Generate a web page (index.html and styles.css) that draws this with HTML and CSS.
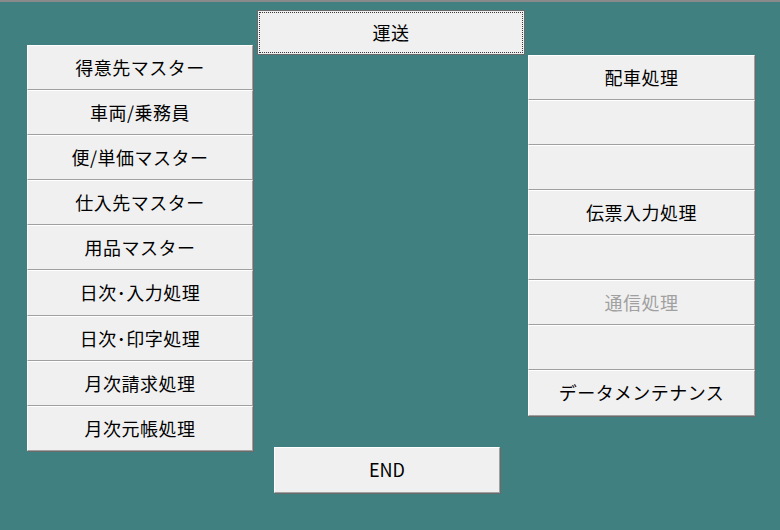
FILE: index.html
```html
<!DOCTYPE html>
<html lang="ja">
<head>
<meta charset="utf-8">
<title>運送</title>
<link rel="stylesheet" href="styles.css">
</head>
<body>
<div class="screen">
  <div class="col col-left">
    <div class="btn">得意先マスター</div>
    <div class="btn">車両/乗務員</div>
    <div class="btn">便/単価マスター</div>
    <div class="btn">仕入先マスター</div>
    <div class="btn">用品マスター</div>
    <div class="btn btn-tall">日次･入力処理</div>
    <div class="btn">日次･印字処理</div>
    <div class="btn">月次請求処理</div>
    <div class="btn">月次元帳処理</div>
  </div>
  <div class="col col-mid">
    <div class="btn btn-default">運送</div>
    <div class="btn btn-end">END</div>
  </div>
  <div class="col col-right">
    <div class="btn">配車処理</div>
    <div class="btn"></div>
    <div class="btn"></div>
    <div class="btn">伝票入力処理</div>
    <div class="btn"></div>
    <div class="btn btn-disabled">通信処理</div>
    <div class="btn"></div>
    <div class="btn btn-tall">データメンテナンス</div>
  </div>
</div>
</body>
</html>
```
FILE: styles.css
```css
html, body {
  margin: 0;
  padding: 0;
}
body {
  width: 780px;
  height: 530px;
  background: #408080;
  border-top: 2px solid #8a8a8a;
  box-sizing: border-box;
  font-family: "Noto Sans CJK JP", "Noto Sans", sans-serif;
  font-size: 18px;
  color: #000;
  overflow: hidden;
}
.screen {
  display: grid;
  grid-template-columns: 226px 268px 226px;
  column-gap: 4px;
  padding-left: 27px;
  align-items: start;
}
.col {
  display: flex;
  flex-direction: column;
}
.col-left {
  margin-top: 43px;
}
.col-mid {
  margin-top: 8px;
}
.col-right {
  margin-top: 53px;
  margin-left: -1px;
}
.btn {
  position: relative;
  height: 45px;
  box-sizing: border-box;
  display: flex;
  align-items: center;
  justify-content: center;
  background: #f0f0f0;
  border-top: 1px solid #ffffff;
  border-left: 1px solid #ffffff;
  border-right: 1px solid #a0a0a0;
  border-bottom: 1px solid #a0a0a0;
  box-shadow: 1px 1px 0 #6a6a6a;
  letter-spacing: 0.5px;
  line-height: 1;
  padding-bottom: 2px;
}
.btn-tall {
  height: 46px;
}
.btn-disabled {
  color: #a0a0a0;
}
.btn-default {
  width: 268px;
  border: 1px solid #6a6a6a;
  box-shadow: none;
}
.btn-default::after {
  content: "";
  position: absolute;
  inset: 1px;
  border: 1px dotted #3a3a3a;
}
.btn-end {
  width: 226px;
  height: 46px;
  margin-top: 392px;
  margin-left: 17px;
  letter-spacing: 0;
}
```
